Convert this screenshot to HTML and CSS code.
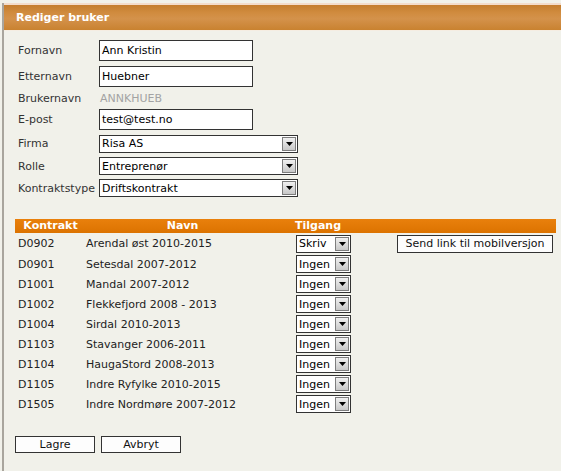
FILE: index.html
```html
<!DOCTYPE html>
<html lang="no">
<head>
<meta charset="utf-8">
<title>Rediger bruker</title>
<link rel="stylesheet" href="styles.css">
</head>
<body>
<div class="frame">
  <div class="titlebar">Rediger bruker</div>
  <div class="content">
    <div class="form">
      <div class="lbl">Fornavn</div><div class="inp">Ann Kristin</div>
      <div class="lbl">Etternavn</div><div class="inp">Huebner</div>
      <div class="lbl">Brukernavn</div><div class="ro">ANNKHUEB</div>
      <div class="lbl">E-post</div><div class="inp">test@test.no</div>
      <div class="lbl">Firma</div><div class="sel wide"><span class="val">Risa AS</span><span class="arrow"><svg width="7" height="4" viewBox="0 0 7 4"><path d="M0 0H7L3.5 4Z" fill="#000"/></svg></span></div>
      <div class="lbl">Rolle</div><div class="sel wide"><span class="val">Entreprenør</span><span class="arrow"><svg width="7" height="4" viewBox="0 0 7 4"><path d="M0 0H7L3.5 4Z" fill="#000"/></svg></span></div>
      <div class="lbl">Kontraktstype</div><div class="sel wide"><span class="val">Driftskontrakt</span><span class="arrow"><svg width="7" height="4" viewBox="0 0 7 4"><path d="M0 0H7L3.5 4Z" fill="#000"/></svg></span></div>
    </div>

    <div class="grid">
      <div class="th">Kontrakt</div><div class="th">Navn</div><div class="th tl">Tilgang</div><div class="th"></div>

      <div class="td c1 first">D0902</div><div class="td first">Arendal øst 2010-2015</div><div class="td first"><div class="sel small"><span class="val">Skriv</span><span class="arrow"><svg width="7" height="4" viewBox="0 0 7 4"><path d="M0 0H7L3.5 4Z" fill="#000"/></svg></span></div></div><div class="td first"><div class="btn link">Send link til mobilversjon</div></div>

      <div class="td c1">D0901</div><div class="td">Setesdal 2007-2012</div><div class="td"><div class="sel small"><span class="val">Ingen</span><span class="arrow"><svg width="7" height="4" viewBox="0 0 7 4"><path d="M0 0H7L3.5 4Z" fill="#000"/></svg></span></div></div><div class="td"></div>

      <div class="td c1">D1001</div><div class="td">Mandal 2007-2012</div><div class="td"><div class="sel small"><span class="val">Ingen</span><span class="arrow"><svg width="7" height="4" viewBox="0 0 7 4"><path d="M0 0H7L3.5 4Z" fill="#000"/></svg></span></div></div><div class="td"></div>

      <div class="td c1">D1002</div><div class="td">Flekkefjord 2008 - 2013</div><div class="td"><div class="sel small"><span class="val">Ingen</span><span class="arrow"><svg width="7" height="4" viewBox="0 0 7 4"><path d="M0 0H7L3.5 4Z" fill="#000"/></svg></span></div></div><div class="td"></div>

      <div class="td c1">D1004</div><div class="td">Sirdal 2010-2013</div><div class="td"><div class="sel small"><span class="val">Ingen</span><span class="arrow"><svg width="7" height="4" viewBox="0 0 7 4"><path d="M0 0H7L3.5 4Z" fill="#000"/></svg></span></div></div><div class="td"></div>

      <div class="td c1">D1103</div><div class="td">Stavanger 2006-2011</div><div class="td"><div class="sel small"><span class="val">Ingen</span><span class="arrow"><svg width="7" height="4" viewBox="0 0 7 4"><path d="M0 0H7L3.5 4Z" fill="#000"/></svg></span></div></div><div class="td"></div>

      <div class="td c1">D1104</div><div class="td">HaugaStord 2008-2013</div><div class="td"><div class="sel small"><span class="val">Ingen</span><span class="arrow"><svg width="7" height="4" viewBox="0 0 7 4"><path d="M0 0H7L3.5 4Z" fill="#000"/></svg></span></div></div><div class="td"></div>

      <div class="td c1">D1105</div><div class="td">Indre Ryfylke 2010-2015</div><div class="td"><div class="sel small"><span class="val">Ingen</span><span class="arrow"><svg width="7" height="4" viewBox="0 0 7 4"><path d="M0 0H7L3.5 4Z" fill="#000"/></svg></span></div></div><div class="td"></div>

      <div class="td c1">D1505</div><div class="td">Indre Nordmøre 2007-2012</div><div class="td"><div class="sel small"><span class="val">Ingen</span><span class="arrow"><svg width="7" height="4" viewBox="0 0 7 4"><path d="M0 0H7L3.5 4Z" fill="#000"/></svg></span></div></div><div class="td"></div>
    </div>

    <div class="actions">
      <div class="btn act">Lagre</div>
      <div class="btn act">Avbryt</div>
    </div>
  </div>
</div>
</body>
</html>
```

FILE: styles.css
```css
html, body {
  margin: 0;
  padding: 0;
}
body {
  background: #f1f1ea;
  font-family: "DejaVu Sans", Verdana, sans-serif;
  font-size: 11px;
  color: #222;
  width: 561px;
  height: 471px;
  overflow: hidden;
}
.frame {
  margin-top: 3px;
  border-left: 2px solid #a9a59d;
  margin-left: 2px;
  height: 468px;
  box-sizing: border-box;
}
.titlebar {
  height: 25px;
  border-top: 2px solid #f3dccb;
  box-sizing: content-box;
  background: linear-gradient(#c47d2e 0%, #d08b3e 30%, #d4924b 55%, #c98230 100%);
  color: #fff;
  font-weight: bold;
  font-size: 11px;
  line-height: 25px;
  padding-left: 12px;
  border-bottom: 1px solid #f5ede2;
}
.content {
  padding-left: 14px;
}
.form {
  display: grid;
  grid-template-columns: 81px 1fr;
  grid-template-rows: 21px 22px 14px 21px 19px 18px 18px;
  row-gap: 4px;
  align-items: center;
  margin-top: 9px;
}
.lbl {
  color: #333;
}
.inp {
  width: 154px;
  height: 21px;
  box-sizing: border-box;
  border: 1px solid #333;
  background: #fff;
  color: #000;
  padding-left: 2px;
  line-height: 19px;
}
.ro {
  color: #a3a3a3;
  padding-left: 1px;
}
.sel {
  display: flex;
  align-items: center;
  justify-content: space-between;
  box-sizing: border-box;
  height: 18px;
  border: 1px solid #333;
  background: #fff;
  color: #000;
  padding-left: 2px;
  padding-right: 1px;
}
.sel.wide {
  width: 199px;
}
.sel.small {
  width: 55px;
}
.arrow {
  width: 14px;
  height: 14px;
  box-sizing: border-box;
  border: 1px solid #7d7d7d;
  background: linear-gradient(#f0f0f0, #c8c8c8);
  display: flex;
  align-items: center;
  justify-content: center;
}
.arrow svg {
  display: block;
}
.grid {
  display: grid;
  grid-template-columns: 71px 193px 80px 197px;
  grid-template-rows: 14px 21px repeat(8, 20px);
  margin-top: 22px;
  margin-left: -3px;
  align-items: center;
}
.th {
  background: linear-gradient(#e9800c, #dc7300);
  color: #fff;
  font-weight: bold;
  height: 14px;
  line-height: 14px;
  text-align: center;
}
.th.tl {
  text-align: left;
  padding-left: 16px;
}
.td {
  color: #222;
}
.td.c1 {
  padding-left: 3px;
}
.td .sel.small {
  margin-left: 17px;
}
.btn {
  box-sizing: border-box;
  border: 1px solid #333;
  background: #fdfdfd;
  color: #111;
  text-align: center;
  height: 18px;
  line-height: 16px;
}
.btn.link {
  width: 156px;
  margin-left: 38px;
}
.actions {
  display: flex;
  gap: 6px;
  margin-top: 22px;
  margin-left: -3px;
}
.btn.act {
  width: 80px;
  height: 17px;
  line-height: 15px;
}
```
